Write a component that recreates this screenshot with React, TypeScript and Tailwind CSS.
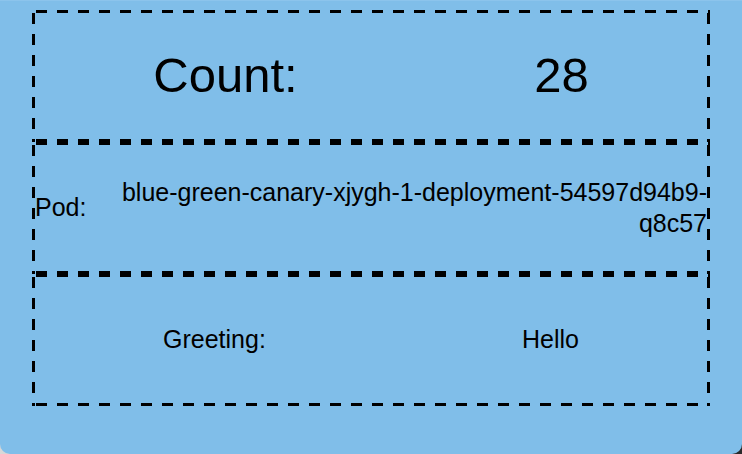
const rows = [
  { label: "Count:", value: "28", big: true },
  { label: "Pod:", value: "blue-green-canary-xjygh-1-deployment-54597d94b9-q8c57" },
  { label: "Greeting:", value: "Hello" },
];

export default function App() {
  return (
    <div className="h-[454px] w-[742px] bg-gradient-to-r from-[#d8d8d8] to-[#2a2a2a]">
      <div
        className="h-full w-full rounded-b-[10px] bg-[#80bee9] border-t border-[#8cc4ec] pt-[9px] text-black"
        style={{ fontFamily: '"Liberation Sans", Arial, sans-serif' }}
      >
        {rows.map((row) => (
          <div
            key={row.label}
            className={`mx-8 flex h-[132px] items-center justify-around px-[3px] bg-[linear-gradient(90deg,#000_11px,transparent_11px),linear-gradient(90deg,#000_11px,transparent_11px),linear-gradient(180deg,#000_11px,transparent_11px),linear-gradient(180deg,#000_11px,transparent_11px)] bg-[length:21px_3px,21px_3px,3px_21px,3px_21px] bg-[position:4px_0,4px_100%,0_3px,100%_3px] [background-repeat:repeat-x,repeat-x,repeat-y,repeat-y] ${
              row.big ? "text-[49px]" : "text-[25px]"
            }`}
          >
            <span>{row.label}</span>
            <span className="text-right leading-[1.25]">{row.value}</span>
          </div>
        ))}
      </div>
    </div>
  );
}
